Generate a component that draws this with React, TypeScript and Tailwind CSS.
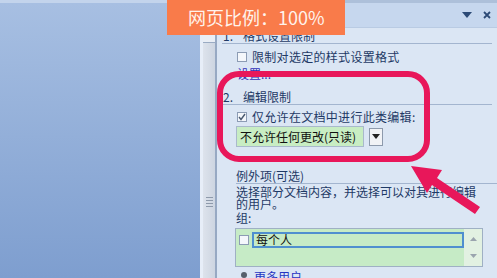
import React from "react";

const FONT = { fontFamily: '"SimSun", "Noto Sans CJK SC", sans-serif' };

function Check({ checked }: { checked?: boolean }) {
  return (
    <span className="flex h-[10px] w-[10px] shrink-0 items-center justify-center border border-[#8c9cb4] bg-[#f4f7fb]">
      {checked && (
        <svg width="8" height="8" viewBox="0 0 8 8">
          <path d="M1 4 L3 6.5 L7 1" fill="none" stroke="#4a5a70" strokeWidth="1.4" />
        </svg>
      )}
    </span>
  );
}

function Heading({ num, label }: { num: string; label: string }) {
  return (
    <div className="box-border flex h-[16px] items-end border-b border-[#a3b5cf] pb-[1px] text-[12px] leading-[12px] text-[#1f3a66]">
      <span className="w-[21px] pl-[1px]">{num}</span>
      <span>{label}</span>
    </div>
  );
}

export default function App() {
  return (
    <div className="relative flex h-[278px] w-[497px] overflow-hidden" style={FONT}>
      {/* document area */}
      <div className="h-full w-[200px] border-t-[3px] border-[#c3d4ec] bg-gradient-to-b from-[#a7bfe2] to-[#7e9ecf]" />

      {/* splitter / scroll strip */}
      <div className="flex h-full w-[15px] flex-col border-l-[3px] border-[#e7eef8] bg-gradient-to-r from-[#dde3ec] to-[#cdd5e1]">
        <div className="mt-[33px] h-[10px] border-y border-[#9aabc3] bg-[#e9eef5]" />
        <div className="mt-[154px] flex flex-col items-center gap-[2px]">
          <span className="h-px w-[7px] bg-[#8e9aab]" />
          <span className="h-px w-[7px] bg-[#8e9aab]" />
          <span className="h-px w-[7px] bg-[#8e9aab]" />
          <span className="h-px w-[7px] bg-[#8e9aab]" />
        </div>
      </div>

      {/* task pane */}
      <div className="flex h-full flex-1 flex-col border-l-2 border-[#97a9c3] bg-[#dbe6f4]">
        <div className="flex h-[28px] shrink-0 items-center justify-end gap-[11px] border-t-[3px] border-b border-t-[#adc0da] border-b-[#b9cbe3] bg-[#c6d7ee] pr-[6px]">
          <svg width="10" height="7" viewBox="0 0 10 7">
            <path d="M0 0 H10 L5 6 Z" fill="#2c4a76" />
          </svg>
          <svg width="8" height="8" viewBox="0 0 8 8">
            <path d="M1 1 L7 7 M7 1 L1 7" stroke="#2c4a76" strokeWidth="1.8" />
          </svg>
        </div>

        <div className="flex flex-col pl-[5px] pr-[5px] text-[12px] leading-[12px] text-[#1f3a66]">
          <Heading num="1." label="格式设置限制" />

          <div className="ml-[15px] mt-[6px] flex h-[14px] items-center gap-[5px]">
            <Check />
            <span className="tracking-[0.3px]">限制对选定的样式设置格式</span>
          </div>

          <div className="ml-[15px] mt-[4px] h-[12px] text-[#3230b8]">设置...</div>

          <div className="mt-[9px]">
            <Heading num="2." label="编辑限制" />
          </div>

          <div className="ml-[15px] mt-[5px] flex h-[14px] items-center gap-[5px]">
            <Check checked />
            <span className="tracking-[0.3px]">仅允许在文档中进行此类编辑:</span>
          </div>

          <div className="ml-[14px] mt-[2px] flex h-[21px] items-center gap-[5px]">
            <div className="flex h-[21px] w-[128px] items-center border border-[#a9b9cc] bg-[#c8edc3] pl-[3px] text-[#111]">
              不允许任何更改(只读)
            </div>
            <div className="flex h-[18px] w-[14px] items-center justify-center border border-[#8d9aac] bg-[#f1f3f6]">
              <svg width="8" height="5" viewBox="0 0 8 5">
                <path d="M0 0 H8 L4 5 Z" fill="#222" />
              </svg>
            </div>
          </div>

          <div className="-mr-[5px] ml-[14px] mt-[21px] box-border flex h-[16px] items-end border-b border-[#a3b5cf] pb-[1px]">
            例外项(可选)
          </div>

          <div className="ml-[14px] mt-[2px]">
            选择部分文档内容，并选择可以对其进行编辑
            <br />
            的用户。
          </div>

          <div className="ml-[14px] mt-[2px]">组:</div>

          <div className="ml-[13px] mt-[4px] flex h-[39px] w-[248px] border border-[#9fb0c4] bg-[#c6ebc6]">
            <div className="flex flex-1 items-start gap-[3px] pl-[3px] pt-[3px]">
              <span className="mt-[3px]">
                <Check />
              </span>
              <div className="flex h-[16px] flex-1 items-center border-2 border-[#4f8fcf] pl-[2px] text-[#111]">
                每个人
              </div>
            </div>
            <div className="flex w-[18px] flex-col items-center justify-between bg-[#e2f1e2] py-[8px]">
              <svg width="7" height="4" viewBox="0 0 7 4">
                <path d="M0 4 L3.5 0 L7 4 Z" fill="#9aa4ae" />
              </svg>
              <svg width="7" height="4" viewBox="0 0 7 4">
                <path d="M0 0 H7 L3.5 4 Z" fill="#9aa4ae" />
              </svg>
            </div>
          </div>

          <div className="ml-[16px] mt-[4px] flex items-center gap-[4px]">
            <svg width="12" height="12" viewBox="0 0 12 12">
              <circle cx="6" cy="4" r="3" fill="#56606c" />
              <path d="M1 12 Q6 5 11 12 Z" fill="#56606c" />
            </svg>
            <span className="text-[#2734c2]">更多用户...</span>
          </div>
        </div>
      </div>

      {/* zoom badge */}
      <div className="absolute left-[167px] top-0 flex h-[35px] w-[178px] items-center pl-[21px] text-[18px] text-[#fff3ec] bg-[#f97b4a]" style={{ fontFamily: '"Noto Sans CJK SC", sans-serif' }}>
        网页比例：100%
      </div>

      {/* highlight ring */}
      <div className="absolute left-[217px] top-[71px] h-[91px] w-[213px] rounded-[22px] border-[6px] border-[#e8175a]" />

      {/* arrow */}
      <svg className="absolute left-0 top-0" width="497" height="278" viewBox="0 0 497 278">
        <polygon points="411,166 442,170 437,178 480,207 475,214 432,185 427,193" fill="#e8175a" />
      </svg>
    </div>
  );
}
